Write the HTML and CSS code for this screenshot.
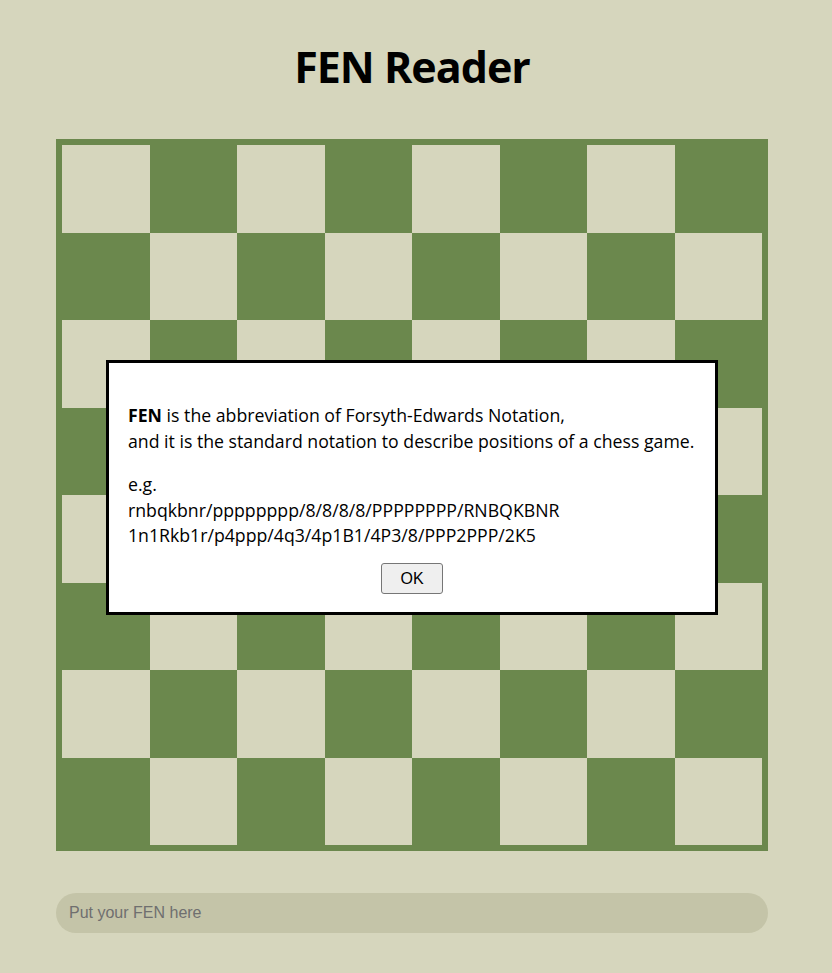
FILE: index.html
```html
<!DOCTYPE html>
<html lang="en">
<head>
<meta charset="utf-8">
<title>FEN Reader</title>
<link rel="stylesheet" href="styles.css">
</head>
<body>
<main class="page">
  <h1 class="title">FEN Reader</h1>
  <div class="board">
    <div class="sq l"></div><div class="sq d"></div><div class="sq l"></div><div class="sq d"></div><div class="sq l"></div><div class="sq d"></div><div class="sq l"></div><div class="sq d"></div>
    <div class="sq d"></div><div class="sq l"></div><div class="sq d"></div><div class="sq l"></div><div class="sq d"></div><div class="sq l"></div><div class="sq d"></div><div class="sq l"></div>
    <div class="sq l"></div><div class="sq d"></div><div class="sq l"></div><div class="sq d"></div><div class="sq l"></div><div class="sq d"></div><div class="sq l"></div><div class="sq d"></div>
    <div class="sq d"></div><div class="sq l"></div><div class="sq d"></div><div class="sq l"></div><div class="sq d"></div><div class="sq l"></div><div class="sq d"></div><div class="sq l"></div>
    <div class="sq l"></div><div class="sq d"></div><div class="sq l"></div><div class="sq d"></div><div class="sq l"></div><div class="sq d"></div><div class="sq l"></div><div class="sq d"></div>
    <div class="sq d"></div><div class="sq l"></div><div class="sq d"></div><div class="sq l"></div><div class="sq d"></div><div class="sq l"></div><div class="sq d"></div><div class="sq l"></div>
    <div class="sq l"></div><div class="sq d"></div><div class="sq l"></div><div class="sq d"></div><div class="sq l"></div><div class="sq d"></div><div class="sq l"></div><div class="sq d"></div>
    <div class="sq d"></div><div class="sq l"></div><div class="sq d"></div><div class="sq l"></div><div class="sq d"></div><div class="sq l"></div><div class="sq d"></div><div class="sq l"></div>
  </div>
  <input class="fen-input" type="text" placeholder="Put your FEN here">
</main>
<div class="modal">
  <p class="modal-text"><b>FEN</b> is the abbreviation of Forsyth-Edwards Notation,<br>and it is the standard notation to describe positions of a chess game.</p>
  <p class="modal-text examples">e.g.<br>rnbqkbnr/pppppppp/8/8/8/8/PPPPPPPP/RNBQKBNR<br>1n1Rkb1r/p4ppp/4q3/4p1B1/4P3/8/PPP2PPP/2K5</p>
  <div class="modal-actions"><button class="ok-btn" type="button">OK</button></div>
</div>
</body>
</html>
```
FILE: styles.css
```css
html, body {
  margin: 0;
  padding: 0;
  background: #d6d6bd;
}
body {
  font-family: "Open Sans", "Noto Sans", sans-serif;
  color: #000;
}
.page {
  width: 712px;
  margin-left: 56px;
  padding-top: 36px;
  display: flex;
  flex-direction: column;
}
.title {
  margin: 0 0 41px;
  font-size: 43px;
  letter-spacing: -1px;
  line-height: 62px;
  height: 62px;
  font-weight: 700;
  text-align: center;
}
.board {
  box-sizing: border-box;
  width: 712px;
  height: 712px;
  border: 6px solid #6b884d;
  background: #6b884d;
  display: grid;
  grid-template-columns: repeat(8, 87.5px);
  grid-template-rows: repeat(8, 87.5px);
}
.sq.l { background: #d6d6bd; }
.sq.d { background: #6b884d; }
.fen-input {
  box-sizing: border-box;
  margin-top: 42px;
  width: 712px;
  height: 40px;
  border: none;
  border-radius: 20px;
  background: #c4c4a8;
  padding: 0 13px;
  font-family: "Liberation Sans", Arial, sans-serif;
  font-size: 16px;
  color: #000;
  outline: none;
}
.fen-input::placeholder { color: #6f6f6f; }
.modal {
  position: fixed;
  left: 106px;
  top: 360px;
  width: 612px;
  height: 255px;
  box-sizing: border-box;
  background: #fff;
  border: 3px solid #000;
  padding: 22px 19px 18px;
}
.modal-text {
  margin: 18px 0;
  font-size: 17.7px;
  line-height: 25.5px;
}
.modal-text.examples { margin-bottom: 14.5px; }
.modal-actions {
  display: flex;
  justify-content: center;
}
.ok-btn {
  width: 62px;
  height: 31px;
  box-sizing: border-box;
  background: #efefef;
  border: 1px solid #767676;
  border-radius: 3px;
  font-family: "Liberation Sans", Arial, sans-serif;
  font-size: 16px;
  color: #000;
  padding: 0;
}
```
